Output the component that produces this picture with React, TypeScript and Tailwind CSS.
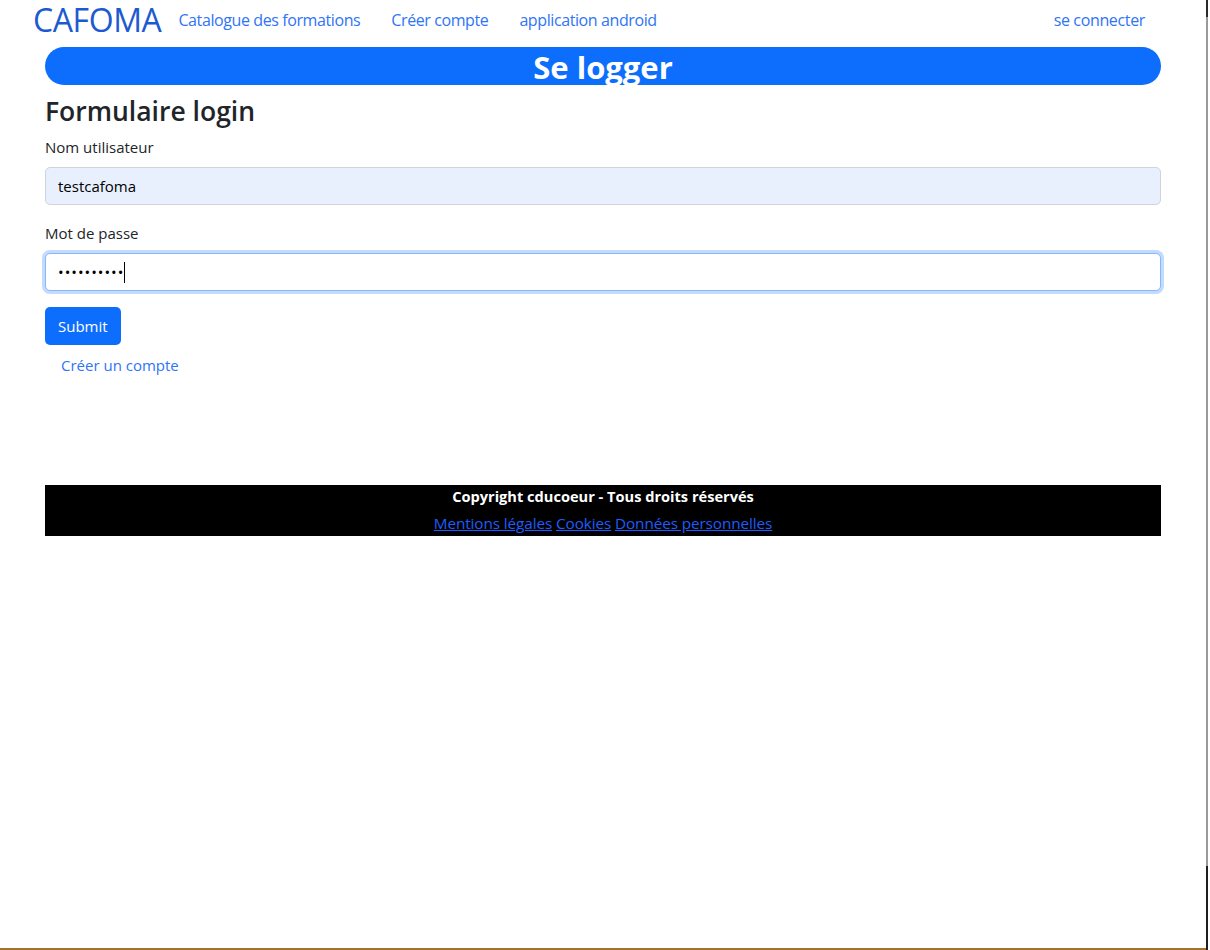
import { useState } from 'react'

const font = { fontFamily: '"Open Sans", "Noto Sans", sans-serif' }

export default function App() {
  const [user, setUser] = useState('testcafoma')
  const [pwd, setPwd] = useState('••••••••••')

  return (
    <div className="flex h-[950px] w-[1210px] bg-white text-[#212529]" style={font}>
      <div className="flex h-[950px] w-[1206px] flex-col border-b-2 border-[#a0732e]">
        <nav className="flex h-[39px] items-center">
          <span className="ml-[33px] text-[32px] leading-[39px] tracking-[-0.4px] text-[#1d5ad1]">CAFOMA</span>
          <ul className="ml-[17px] flex items-center text-[16px] tracking-[-0.4px] text-[#2f74f6]">
            <li><a className="block" href="#">Catalogue des formations</a></li>
            <li><a className="ml-[31px] block" href="#">Créer compte</a></li>
            <li><a className="ml-[31px] block" href="#">application android</a></li>
          </ul>
          <a className="ml-auto mr-[61px] text-[16px] tracking-[-0.35px] text-[#2f74f6]" href="#">se connecter</a>
        </nav>

        <main className="mx-[45px] w-[1116px]">
          <h1 className="mt-[8px] flex h-[38px] items-start justify-center rounded-full bg-[#0d6efd] pt-[1px] text-[31px] font-bold leading-[38px] text-white">
            Se logger
          </h1>

          <h2 className="mt-[10px] text-[26.5px] font-semibold leading-[32px] text-[#212529]">Formulaire login</h2>

          <form className="mt-[8px]" onSubmit={(e) => e.preventDefault()}>
            <label className="block text-[15px] leading-[24px]">Nom utilisateur</label>
            <input
              value={user}
              onChange={(e) => setUser(e.target.value)}
              className="mt-[8px] block h-[38px] w-full rounded-[5px] border border-[#ced4da] bg-[#e8f0fe] px-[12px] text-[15px] text-black outline-none"
            />

            <label className="mt-[16px] block text-[15px] leading-[24px]">Mot de passe</label>
            <div className="mt-[8px] flex h-[38px] w-full items-center rounded-[5px] border border-[#86b7fe] bg-white px-[12px] text-[15px] text-black ring-[3px] ring-[#c2dbfe]">
              <span className="tracking-[1px]">{pwd}</span>
              <span className="h-[21px] w-px bg-black" />
              <input className="hidden" value={pwd} onChange={(e) => setPwd(e.target.value)} />
            </div>

            <button className="mt-[16px] block h-[38px] rounded-[5px] bg-[#0d6efd] px-[13px] text-[15px] text-white">Submit</button>
          </form>

          <a className="ml-[16px] mt-[8px] block text-[15px] leading-[24px] text-[#2f74f6]" href="#">Créer un compte</a>

          <footer className="mt-[108px] bg-black pb-[3px] text-center">
            <p className="text-[14.6px] font-bold leading-[22px] text-white">Copyright cducoeur - Tous droits réservés</p>
            <p className="mt-[6px] text-[15.3px] leading-[20px] tracking-[-0.1px] text-[#1f5cff]">
              <a className="underline" href="#">Mentions légales</a>{' '}
              <a className="underline" href="#">Cookies</a>{' '}
              <a className="underline" href="#">Données personnelles</a>
            </p>
          </footer>
        </main>
      </div>
      <div className="flex h-[950px] w-[4px] flex-col">
        <div className="h-[17px] w-[2px] bg-[#2b2b2b]" />
        <div className="h-[849px] w-[2px] bg-[#9a9a9a]" />
        <div className="h-[84px] w-[2px] bg-[#1f1f1f]" />
      </div>
    </div>
  )
}
